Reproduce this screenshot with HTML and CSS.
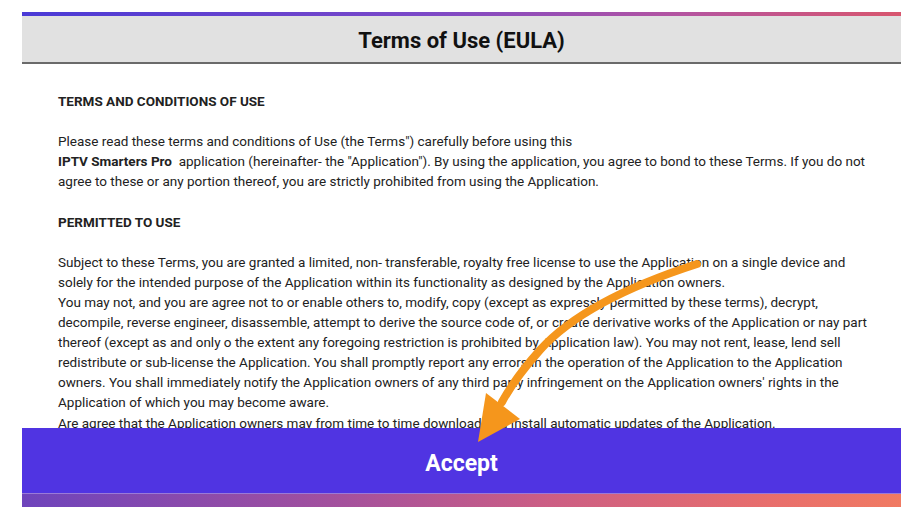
FILE: index.html
```html
<!DOCTYPE html>
<html lang="en">
<head>
    <meta charset="UTF-8">
    <title>Terms of Use (EULA)</title>
    <meta name="viewport" content="width=device-width, initial-scale=1.0">
    <link rel="stylesheet" href="styles.css">
</head>
<body>
    <div class="dialog">
        <div class="topline"></div>
        <div class="header">Terms of Use (EULA)</div>
        <div class="content">
            <p class="title">TERMS AND CONDITIONS OF USE</p>
            <p>Please read these terms and conditions of Use (the Terms") carefully before using this<br>
            <b>IPTV Smarters Pro</b>&nbsp; application (hereinafter- the "Application"). By using the application, you agree to bond to these Terms. If you do not<br>
            agree to these or any portion thereof, you are strictly prohibited from using the Application.</p>
            <p class="title">PERMITTED TO USE</p>
            <p>Subject to these Terms, you are granted a limited, non- transferable, royalty free license to use the Application on a single device and<br>
            solely for the intended purpose of the Application within its functionality as designed by the Application owners.<br>
            You may not, and you are agree not to or enable others to, modify, copy (except as expressly permitted by these terms), decrypt,<br>
            decompile, reverse engineer, disassemble, attempt to derive the source code of, or create derivative works of the Application or nay part<br>
            thereof (except as and only o the extent any foregoing restriction is prohibited by Application law). You may not rent, lease, lend sell<br>
            redistribute or sub-license the Application. You shall promptly report any errors in the operation of the Application to the Application<br>
            owners. You shall immediately notify the Application owners of any third party infringement on the Application owners' rights in the<br>
            Application of which you may become aware.<br>
            Are agree that the Application owners may from time to time download and install automatic updates of the Application.</p>
        </div>
        <button class="accept">Accept</button>
        <div class="bottomline"></div>
    </div>
    <!-- стрелка поверх -->
    <svg class="arrow" width="901" height="507" viewBox="0 0 901 507">
        <path d="M697 264 Q585 300 540 350 Q515 378 502 402" fill="none" stroke="#f5961c" stroke-width="8" stroke-linecap="round"/>
        <polygon points="486,393 520,419 478,442" fill="#f5961c"/>
    </svg>
</body>
</html>
```

FILE: styles.css
```css
body { margin: 0; background: #fff; font-family: Roboto, "Liberation Sans", sans-serif; color: #222; overflow: hidden; }
.dialog { margin: 12px 0 0 22px; }
.topline { height: 4px; background: linear-gradient(90deg, #4a3ad6, #7a48c8 45%, #b454a0 75%, #d8566e); }
.header { height: 46px; line-height: 50px; background: #e1e1e1; border-bottom: 2px solid #6a6a6a; text-align: center; font-size: 22px; font-weight: bold; color: #111; }
.content { height: 364px; overflow: hidden; padding: 27px 0 0 36px; box-sizing: border-box; font-size: 13.5px; line-height: 20.1px; }
.content p { margin: 0 0 20.1px; white-space: nowrap; }
.content .title { font-weight: bold; }
.content b { font-weight: bold; }
.accept { display: block; width: 100%; height: 65px; border: none; background: #5034e2; color: #fff; font-family: inherit; font-size: 23px; font-weight: bold; padding: 5px 0 0; cursor: pointer; }
.bottomline { height: 13px; border-top: 1px solid #9a7ad8; background: linear-gradient(90deg, #6e44bc, #a2509e 35%, #cc5e84 60%, #e86e6c 85%, #f07a62); }
.arrow { position: absolute; left: 0; top: 0; pointer-events: none; }
```
